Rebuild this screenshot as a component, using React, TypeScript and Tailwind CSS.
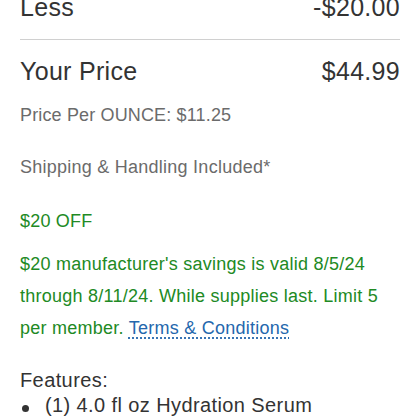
export default function App() {
  return (
    <div className="w-[420px] h-[420px] overflow-hidden bg-white px-5 [font-family:'Liberation_Sans',Arial,sans-serif]">
      <div className="-mt-[8px] flex justify-between border-b border-[#d0d0d0] pb-[17px] text-[25px] leading-[30px] tracking-[0.3px] text-[#333]">
        <span>Less</span>
        <span>-$20.00</span>
      </div>
      <div className="mt-[16px] flex justify-between text-[25px] leading-[30px] tracking-[0.3px] text-[#333]">
        <span>Your Price</span>
        <span>$44.99</span>
      </div>
      <p className="mt-[17px] text-[18px] leading-[24px] tracking-[0.15px] text-[#6b6b6b]">
        Price Per OUNCE: $11.25
      </p>
      <p className="mt-[28px] text-[18px] leading-[24px] tracking-[0.25px] text-[#6b6b6b]">
        Shipping &amp; Handling Included*
      </p>
      <p className="mt-[30px] text-[18px] leading-[24px] tracking-[0.2px] text-[#218a24]">
        $20 OFF
      </p>
      <p className="mt-[15px] whitespace-nowrap text-[18px] leading-[32px] tracking-[0.25px] text-[#218a24]">
        $20 manufacturer's savings is valid 8/5/24
        <br />
        through 8/11/24. While supplies last. Limit 5
        <br />
        per member.{" "}
        <a
          href="#"
          className="text-[#2467ad] underline decoration-dotted decoration-[#2467ad] underline-offset-[4px]"
        >
          Terms &amp; Conditions
        </a>
      </p>
      <p className="mt-[24px] text-[20px] leading-[25px] tracking-[0.4px] text-[#333]">Features:</p>
      <ul>
        <li className="flex items-start text-[20px] leading-[25px] tracking-[0.4px] text-[#333]">
          <span className="ml-[2px] mr-[16px] mt-[12px] h-[7px] w-[7px] shrink-0 rounded-full bg-[#333]" />
          <span className="whitespace-nowrap">(1) 4.0 fl oz Hydration Serum</span>
        </li>
      </ul>
    </div>
  );
}
